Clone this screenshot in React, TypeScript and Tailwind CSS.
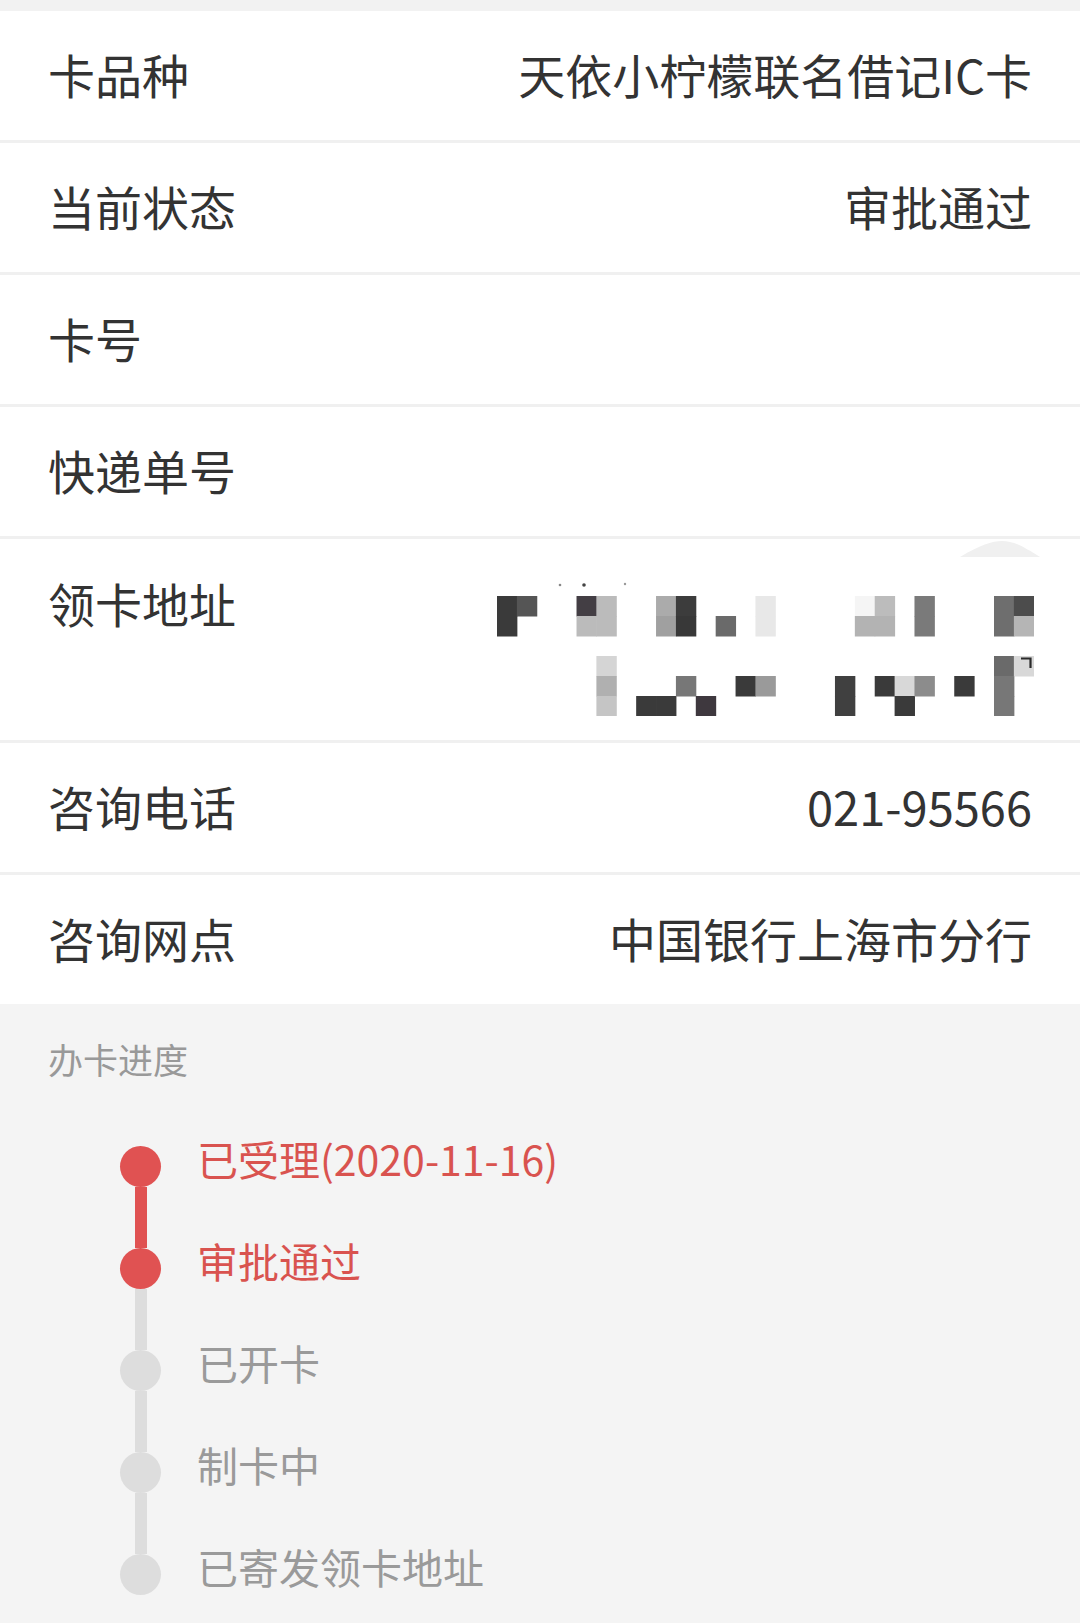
import React from 'react';

// 卡片申请详情 + 办卡进度
const FONT = { fontFamily: '"Noto Sans CJK SC", "Noto Sans", sans-serif' };

interface InfoRow {
  label: string;
  value?: string;
}

const ROWS_TOP: InfoRow[] = [
  { label: '卡品种', value: '天依小柠檬联名借记IC卡' },
  { label: '当前状态', value: '审批通过' },
  { label: '卡号' },
  { label: '快递单号' },
];

const ROWS_BOTTOM: InfoRow[] = [
  { label: '咨询电话', value: '021-95566' },
  { label: '咨询网点', value: '中国银行上海市分行' },
];

const STEPS = [
  { text: '已受理(2020-11-16)', done: true },
  { text: '审批通过', done: true },
  { text: '已开卡', done: false },
  { text: '制卡中', done: false },
  { text: '已寄发领卡地址', done: false },
];

// 打码后的地址：[列, 行, 颜色]
const CELL = 19.88;
const MOSAIC: [number, number, string][] = [
  [0, 0, '#3a3a3a'], [0, 1, '#3a3a3a'],
  [1, 0, '#555555'],
  [4, 0, '#433e44'], [4, 1, '#bbbbbb'],
  [5, 0, '#bbbbbb'], [5, 1, '#bbbbbb'],
  [8, 0, '#ababab'], [8, 1, '#a0a0a0'],
  [9, 0, '#3c3c3c'], [9, 1, '#383838'],
  [11, 1, '#6a6a6a'],
  [13, 0, '#e8e8e8'], [13, 1, '#e8e8e8'],
  [18, 0, '#f5f5f5'], [18, 1, '#b3b3b3'],
  [19, 0, '#bcbcbc'], [19, 1, '#b3b3b3'],
  [21, 0, '#7a7a7a'], [21, 1, '#7a7a7a'],
  [25, 0, '#6e6e6e'], [25, 1, '#6e6e6e'],
  [26, 0, '#4c4c4c'], [26, 1, '#b5b5b5'],
  [5, 3, '#d5d5d5'], [5, 4, '#b0b0b0'], [5, 5, '#c5c5c5'],
  [7, 5, '#3a3a3a'], [8, 5, '#3a3a3a'],
  [9, 4, '#777777'],
  [10, 5, '#3e383e'],
  [12, 4, '#3a3a3a'],
  [13, 4, '#9a9a9a'],
  [17, 4, '#404040'], [17, 5, '#404040'],
  [19, 4, '#3a3a3a'],
  [20, 4, '#d8d8d8'], [20, 5, '#3a3a3a'],
  [21, 4, '#8c8c8c'],
  [23, 4, '#3a3a3a'],
  [25, 3, '#6a6a6a'], [25, 4, '#777777'], [25, 5, '#777777'],
  [26, 3, '#d8d8d8'],
];

function Row({ label, value, last }: InfoRow & { last?: boolean }) {
  return (
    <div
      className={`flex items-center justify-between bg-white px-12 ${
        last ? 'h-[129px]' : 'h-[132px] border-b-[3px] border-[#f0f0f0]'
      }`}
    >
      <span className="mb-[4px] text-[47px] leading-[47px] text-[#333333]">{label}</span>
      {value && <span className="mb-[4px] text-[47px] leading-[47px] text-[#333333]">{value}</span>}
    </div>
  );
}

function AddressMosaic() {
  return (
    <svg width="537" height="136" viewBox="0 0 537 136" className="-mr-[2px] mt-[41px]">
      <circle cx="63" cy="5" r="1.3" fill="#888" />
      <circle cx="87" cy="5" r="1.8" fill="#444" />
      <circle cx="128" cy="4" r="1.2" fill="#999" />
      {MOSAIC.map(([c, r, color]) => (
        <rect
          key={`${c}-${r}`}
          x={c * CELL}
          y={16 + r * 20}
          width={CELL + 0.5}
          height="20.5"
          fill={color}
        />
      ))}
      <path d="M524 78.5 H533.5 V88" fill="none" stroke="#2a2a2a" strokeWidth="2.2" />
    </svg>
  );
}

export default function App() {
  return (
    <div className="flex min-h-screen w-full flex-col bg-[#f4f4f4]" style={FONT}>
      <div className="h-[11px] bg-[#f2f2f2]" />

      {ROWS_TOP.map((r) => (
        <Row key={r.label} {...r} />
      ))}

      {/* 领卡地址 */}
      <div className="relative flex h-[204px] items-start justify-between border-b-[3px] border-[#f0f0f0] bg-white px-12">
        <span className="pt-[40px] text-[47px] leading-[47px] text-[#333333]">领卡地址</span>
        <AddressMosaic />
        <svg width="80" height="18" viewBox="0 0 80 18" className="absolute right-[40px] top-0">
          <path d="M0 18 C20 6 32 2 42 2 C54 2 64 8 80 18 Z" fill="#f0f0f0" />
        </svg>
      </div>

      {ROWS_BOTTOM.map((r, i) => (
        <Row key={r.label} {...r} last={i === ROWS_BOTTOM.length - 1} />
      ))}

      {/* 办卡进度 */}
      <div className="flex-1 bg-[#f4f4f4] px-12 pt-[37px]">
        <div className="text-[35px] leading-[35px] text-[#999999]">办卡进度</div>
        <div className="mt-[39px] pl-[72px]">
          {STEPS.map((s, i) => {
            const prev = STEPS[i - 1];
            const next = STEPS[i + 1];
            const topColor = prev ? (prev.done && s.done ? 'bg-[#e05252]' : 'bg-[#dddddd]') : 'bg-transparent';
            const bottomColor = next ? (next.done ? 'bg-[#e05252]' : 'bg-[#dddddd]') : 'bg-transparent';
            return (
              <div key={s.text} className="flex h-[102px] items-center gap-[36px]">
                <div className="flex h-full w-[41px] flex-col items-center">
                  <div className={`w-[12px] flex-1 ${topColor}`} />
                  <div
                    className={`h-[41px] w-[41px] shrink-0 rounded-full ${
                      s.done ? 'bg-[#e05252]' : 'bg-[#dddddd]'
                    }`}
                  />
                  <div className={`w-[12px] flex-1 ${bottomColor}`} />
                </div>
                <span
                  className={`mb-[16px] text-[41px] leading-[41px] ${
                    s.done ? 'text-[#d9534f]' : 'text-[#9a9a9a]'
                  }`}
                >
                  {s.text}
                </span>
              </div>
            );
          })}
        </div>
      </div>
    </div>
  );
}
